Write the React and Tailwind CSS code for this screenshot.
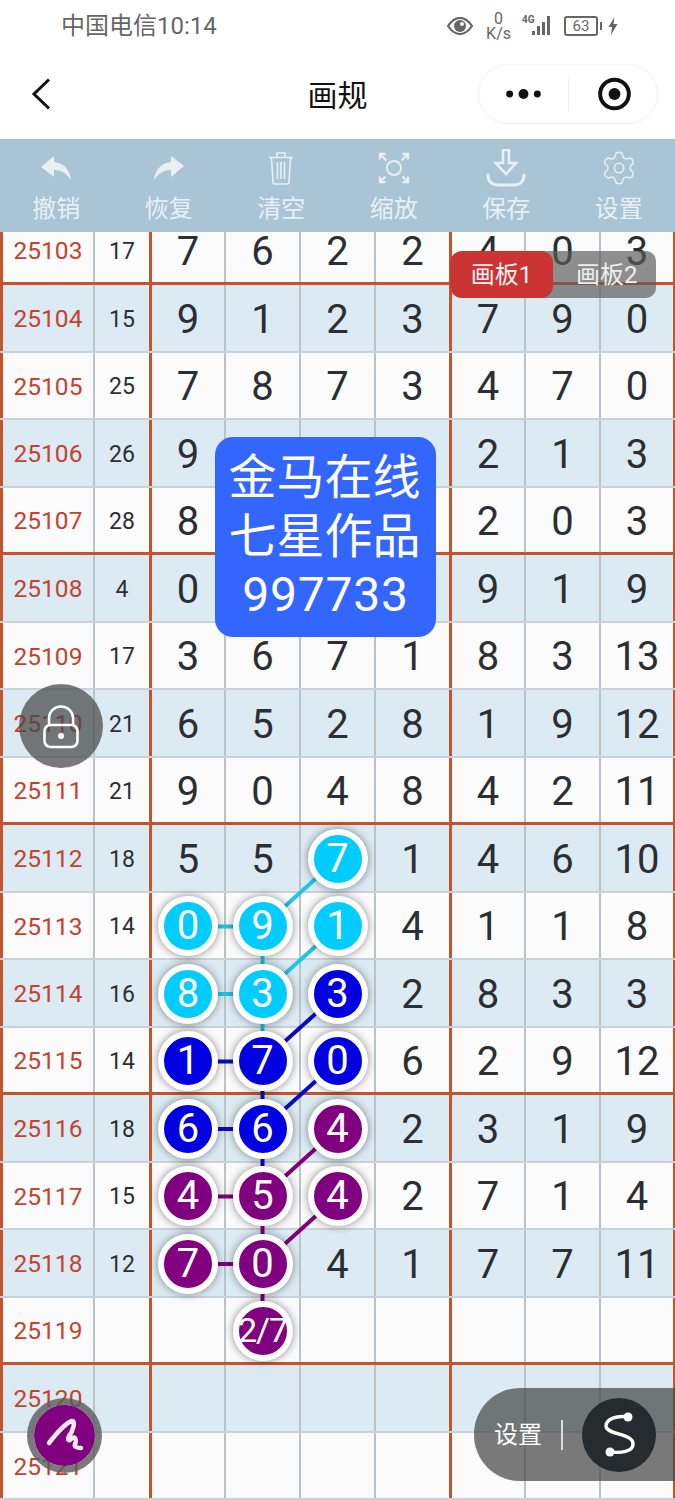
import React from "react";
import { Settings } from "lucide-react";

const FONT = { fontFamily: 'Roboto, "Noto Sans CJK SC", sans-serif' };

const C = "bg-[#00ccff]";
const B = "bg-[#0000e0]";
const P = "bg-[#800080]";

const rows = [
  { id: "25103", n: "17", v: ["7", "6", "2", "2", "4", "0", "3"] },
  { id: "25104", n: "15", v: ["9", "1", "2", "3", "7", "9", "0"] },
  { id: "25105", n: "25", v: ["7", "8", "7", "3", "4", "7", "0"] },
  { id: "25106", n: "26", v: ["9", "", "", "", "2", "1", "3"] },
  { id: "25107", n: "28", v: ["8", "", "", "", "2", "0", "3"] },
  { id: "25108", n: "4", v: ["0", "", "", "", "9", "1", "9"] },
  { id: "25109", n: "17", v: ["3", "6", "7", "1", "8", "3", "13"] },
  { id: "25110", n: "21", v: ["6", "5", "2", "8", "1", "9", "12"] },
  { id: "25111", n: "21", v: ["9", "0", "4", "8", "4", "2", "11"] },
  { id: "25112", n: "18", v: ["5", "5", "7", "1", "4", "6", "10"], m: { 2: C } },
  { id: "25113", n: "14", v: ["0", "9", "1", "4", "1", "1", "8"], m: { 0: C, 1: C, 2: C } },
  { id: "25114", n: "16", v: ["8", "3", "3", "2", "8", "3", "3"], m: { 0: C, 1: C, 2: B } },
  { id: "25115", n: "14", v: ["1", "7", "0", "6", "2", "9", "12"], m: { 0: B, 1: B, 2: B } },
  { id: "25116", n: "18", v: ["6", "6", "4", "2", "3", "1", "9"], m: { 0: B, 1: B, 2: P } },
  { id: "25117", n: "15", v: ["4", "5", "4", "2", "7", "1", "4"], m: { 0: P, 1: P, 2: P } },
  { id: "25118", n: "12", v: ["7", "0", "4", "1", "7", "7", "11"], m: { 0: P, 1: P } },
  { id: "25119", n: "", v: ["", "2/7", "", "", "", "", ""], m: { 1: P } },
  { id: "25120", n: "", v: ["", "", "", "", "", "", ""] },
  { id: "25121", n: "", v: ["", "", "", "", "", "", ""] },
];

const CY = "#22c5e8";
const BL = "#0a0ac8";
const PU = "#800080";
// coordinates are relative to the table's top (page y - 217.5)
const y = (i) => 33.5 + i * 67.5;
const X0 = 188, X1 = 262.5, X2 = 337.5;
const links = [
  [X0, 10, X1, 10, CY], [X1, 10, X2, 9, CY], [X1, 10, X1, 11, CY],
  [X0, 11, X1, 11, CY], [X1, 11, X2, 10, CY], [X1, 11, X1, 12, CY],
  [X0, 12, X1, 12, BL], [X1, 12, X2, 11, BL], [X1, 12, X1, 13, BL],
  [X0, 13, X1, 13, BL], [X1, 13, X2, 12, BL], [X1, 13, X1, 14, BL],
  [X0, 14, X1, 14, PU], [X1, 14, X2, 13, PU], [X1, 14, X1, 15, PU],
  [X0, 15, X1, 15, PU], [X1, 15, X2, 14, PU], [X1, 15, X1, 16, PU],
];

function Row({ r, i }) {
  const heavy = i % 4 === 0;
  return (
    <div
      className={`box-border grid h-[67.5px] grid-cols-[95px_57px_74px_75px_75px_76px_74px_75px_74px] ${i % 2 === 1 ? "bg-[#dcebf3]" : "bg-[#fbfbfb]"} ${heavy ? "border-b-[3px] border-[#c2552c]" : "border-b-2 border-[#c9d2d8]"}`}
    >
      <div className="flex items-center justify-center border-l-[3px] border-r-2 border-l-[#c2552c] border-r-[#bac3c8] pt-[4px] text-[24.5px] text-[#c4422e]">
        {r.id}
      </div>
      <div className="flex items-center justify-center border-r-[3px] border-[#c2552c] pt-[4px] text-[23px] text-[#2b2f33]">
        {r.n}
      </div>
      {r.v.map((val, k) => {
        const mark = r.m && r.m[k];
        const edge =
          k === 3
            ? "border-r-[3px] border-[#c2552c]"
            : k === 6
              ? "border-r-2 border-[#c2552c]"
              : "border-r-2 border-[#bac3c8]";
        return (
          <div key={k} className={`flex items-center justify-center pt-[2px] ${edge}`}>
            {mark ? (
              <div
                className={`relative z-20 flex h-[60px] w-[60px] shrink-0 items-center justify-center rounded-full border-[6px] border-white text-white shadow-[0_0_8px_rgba(0,0,0,0.45)] ${mark} ${val.length > 1 ? "text-[34px] tracking-[-1px]" : "text-[40px]"}`}
              >
                {val}
              </div>
            ) : (
              <span className="block pt-[2px] text-[40px] text-[#2b2f33]">{val}</span>
            )}
          </div>
        );
      })}
    </div>
  );
}

function Tool({ label, children }) {
  return (
    <div className="flex w-[112.5px] flex-col items-center">
      <div className="flex h-[46px] items-center justify-center">{children}</div>
      <div className="mt-[1px] text-[24px] leading-[34px] text-[#e9f0f4]">{label}</div>
    </div>
  );
}

export default function App() {
  return (
    <div className="relative h-[1500px] w-[675px] overflow-hidden bg-white" style={FONT}>
      {/* status bar */}
      <div className="flex h-[52px] items-center justify-between pl-[61px] pr-[57px] text-[#666]">
        <div className="text-[24px] leading-none">中国电信10:14</div>
        <div className="flex items-center">
          <svg width="26" height="18" viewBox="0 0 26 18" className="mr-[13px]">
            <path d="M1 9C5 3 9 1 13 1s8 2 12 8c-4 6-8 8-12 8S5 15 1 9z" fill="none" stroke="#666" strokeWidth="2.2" />
            <circle cx="13" cy="9" r="6" fill="#666" />
            <circle cx="15" cy="7" r="2" fill="#fff" />
          </svg>
          <div className="mr-[11px] flex flex-col items-center text-[16px] leading-[15px] text-[#666]">
            <span>0</span>
            <span>K/s</span>
          </div>
          <svg width="34" height="26" viewBox="0 0 34 26" className="mr-[8px]">
            <text x="0" y="10" fontSize="10" fontWeight="700" fill="#666">4G</text>
            <rect x="10" y="18" width="3" height="4" fill="#666" />
            <rect x="15" y="13" width="3" height="9" fill="#666" />
            <rect x="20" y="9" width="3" height="13" fill="#666" />
            <rect x="25" y="3" width="3" height="19" fill="#666" />
          </svg>
          <div className="flex h-[20px] w-[34px] items-center justify-center rounded-[3px] border-2 border-[#666] text-[15px] leading-none text-[#666]">63</div>
          <div className="ml-[2px] h-[8px] w-[2px] bg-[#666]" />
          <svg width="10" height="18" viewBox="0 0 10 18" className="ml-[6px]">
            <path d="M6.5 0L0.5 10H4L3 18L9.5 7H5.5z" fill="#666" />
          </svg>
        </div>
      </div>

      {/* nav */}
      <div className="relative flex h-[87px] items-center justify-center">
        <svg width="20" height="32" viewBox="0 0 20 32" className="absolute left-[31px] top-[26px]" fill="none" stroke="#111" strokeWidth="3">
          <path d="M18 1.5L3 16l15 14.5" />
        </svg>
        <div className="mb-[1px] text-[30px] font-normal text-[#111]">画规</div>
        <div className="absolute left-[478px] top-[12px] flex h-[60px] w-[180px] items-center rounded-full border border-[#f3f3f3]">
          <svg width="90" height="20" viewBox="0 0 90 20">
            <circle cx="31" cy="10" r="3.5" fill="#111" />
            <circle cx="45" cy="10" r="5" fill="#111" />
            <circle cx="59" cy="10" r="3.5" fill="#111" />
          </svg>
          <div className="h-[33px] w-px bg-[#f0f0f0]" />
          <svg width="89" height="36" viewBox="0 0 89 36">
            <circle cx="46" cy="18" r="14.5" fill="none" stroke="#111" strokeWidth="4" />
            <circle cx="46" cy="18" r="6" fill="#111" />
          </svg>
        </div>
      </div>

      {/* toolbar */}
      <div className="relative z-30 flex h-[93px] bg-[#a9c4d4] pt-[6px]">
        <Tool label="撤销">
          <svg width="31" height="24" viewBox="0 0 31 24">
            <path d="M0 11L13 0v6c10 1 16 8 17 18-5-7-10-10-17-10v7z" fill="#e9f0f4" />
          </svg>
        </Tool>
        <Tool label="恢复">
          <svg width="31" height="24" viewBox="0 0 31 24">
            <path d="M31 10L18 0v6C8 7 2 14 1 24c5-7 10-10 17-10v7z" fill="#e9f0f4" />
          </svg>
        </Tool>
        <Tool label="清空">
          <svg width="26" height="34" viewBox="0 0 26 34" fill="none" stroke="#e9f0f4" strokeWidth="1.6">
            <path d="M1 6.5h24M9 6V2h8v4" />
            <path d="M3.5 7l1.5 24c0 1.5 1 2 2 2h12c1 0 2-.5 2-2l1.5-24" />
            <path d="M9.5 11v17M13 11v17M16.5 11v17" />
          </svg>
        </Tool>
        <Tool label="缩放">
          <svg width="32" height="32" viewBox="0 0 34 34" fill="none" stroke="#e9f0f4" strokeWidth="2">
            <circle cx="17" cy="17" r="7.5" />
            <path d="M2 8V2h6M2 2l7 7M32 8V2h-6M32 2l-7 7M2 26v6h6M2 32l6-6M32 26v6h-6M32 32l-6-6" strokeWidth="2.4" />
          </svg>
        </Tool>
        <Tool label="保存">
          <svg width="40" height="38" viewBox="0 0 40 38" fill="none" stroke="#e9f0f4" strokeWidth="2.6">
            <path d="M17 1h6v13h7L20 25 10 14h7z" />
            <path d="M2 26c0 8 6 10 10 10h16c4 0 10-2 10-10" strokeLinecap="round" strokeWidth="3" />
          </svg>
        </Tool>
        <Tool label="设置">
          <Settings size={38} strokeWidth={1} color="#e9f0f4" />
        </Tool>
      </div>

      {/* table */}
      <div className="relative -mt-[14.5px]">
        {rows.map((r, i) => (
          <Row key={r.id} r={r} i={i} />
        ))}
        <svg width="675" height="1284" className="absolute left-0 top-0 z-10">
          {links.map(([x1, a, x2, b, c], i) => (
            <line key={i} x1={x1} y1={y(a)} x2={x2} y2={y(b)} stroke={c} strokeWidth="4" />
          ))}
        </svg>
      </div>

      {/* board tabs */}
      <div className="absolute left-[530px] top-[251px] z-30 flex h-[47px] w-[126px] items-center whitespace-nowrap rounded-r-[10px] bg-[rgba(90,90,90,0.68)] pl-[46px] text-[24px] text-[#eee]">
        画板2
      </div>
      <div className="absolute left-[450px] top-[251px] z-30 flex h-[47px] w-[103px] items-center justify-center rounded-[12px] bg-[#cc3333] text-[24px] text-[#f3f3f3]">
        画板1
      </div>

      {/* notice */}
      <div className="absolute left-[215px] top-[437px] z-30 flex h-[200px] w-[221px] flex-col items-center justify-center rounded-[18px] bg-[#3366ff] text-[48px] leading-[58.5px] text-white">
        <div className="-ml-[2px]">金马在线</div>
        <div className="-ml-[2px]">七星作品</div>
        <div className="tracking-[0.8px]">997733</div>
      </div>

      {/* lock */}
      <div className="absolute left-[19px] top-[684px] z-30 flex h-[84px] w-[84px] items-center justify-center rounded-full bg-[rgba(70,70,70,0.72)]">
        <svg width="36" height="44" viewBox="0 0 36 44" className="mt-[2px]" fill="none" stroke="#fff" strokeWidth="2.6">
          <rect x="1.5" y="20" width="33" height="22" rx="6" />
          <path d="M6 20v-7a12 11.5 0 0 1 24 0v7" />
          <circle cx="18" cy="31" r="3" fill="#fff" stroke="none" />
        </svg>
      </div>

      {/* pen */}
      <div className="absolute left-[27px] top-[1398px] z-30 flex h-[75px] w-[75px] items-center justify-center rounded-full border-[7px] border-[rgba(90,90,90,0.8)] bg-[#800080] bg-clip-padding">
        <svg width="40" height="40" viewBox="0 0 40 40" fill="none" stroke="#f6e9f6" strokeWidth="4.5" strokeLinecap="round" strokeLinejoin="round">
          <path d="M4 27C11 18 20 7 27 5c4 0 1 10-3 15-2 4 0 6 3 2 3-2 5 2 3 6-1 3 2 4 6 4" />
        </svg>
      </div>

      {/* settings pill */}
      <div className="absolute left-[474px] top-[1388px] z-30 flex h-[93px] w-[201px] items-center rounded-l-[46px] bg-[rgba(70,70,70,0.72)] pl-[20px]">
        <span className="text-[24px] text-white">设置</span>
        <div className="ml-[19px] h-[30px] w-[2px] bg-[#ddd]" />
        <div className="ml-[19px] flex h-[74px] w-[74px] items-center justify-center rounded-full bg-[#252b2f]">
          <svg width="44" height="48" viewBox="0 0 44 48" fill="none" stroke="#fff" strokeWidth="3.4">
            <path d="M31 6C20 4 9 8 9 15c0 9 27 7 27 18 0 8-12 9-23 8" />
            <circle cx="31" cy="6" r="4.5" fill="#fff" stroke="none" />
            <circle cx="13" cy="41" r="4.5" fill="#fff" stroke="none" />
          </svg>
        </div>
      </div>
    </div>
  );
}
